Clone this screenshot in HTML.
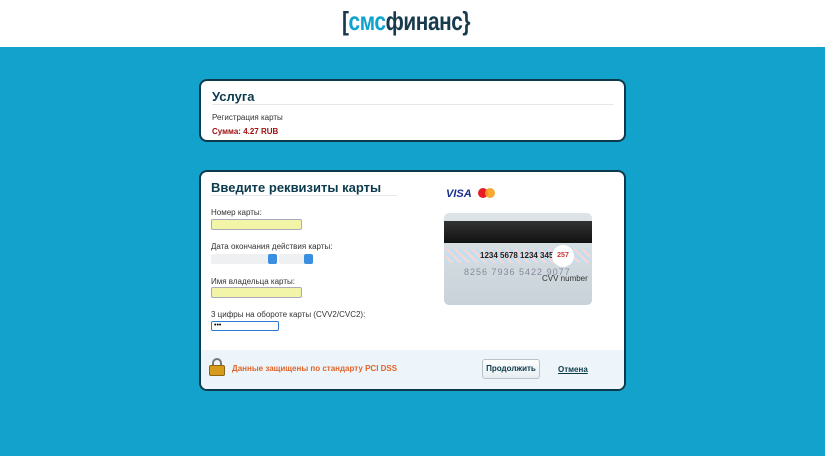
<!DOCTYPE html>
<html><head><meta charset="utf-8"><style>
*{box-sizing:border-box;margin:0;padding:0}
body{width:825px;height:456px;background:#12a2cb;font-family:"Liberation Sans",sans-serif;position:relative;overflow:hidden}
.hdr{position:absolute;left:0;top:0;width:825px;height:47px;background:#fff}
.logo{position:absolute;left:342px;top:4px;font-size:26px;font-weight:bold;letter-spacing:-0.5px;color:#173a4d;line-height:34px;transform:scaleX(0.8);transform-origin:left top;white-space:nowrap}
.logo .c{color:#0ea3cc}
.box{position:absolute;left:199px;width:427px;background:#fff;border:2px solid #0d3a4a;border-radius:8px;overflow:hidden}
h2{font-size:13px;color:#0b3b4d;font-weight:bold}
.hr{height:1px;background:#e4e8ea}
.s{font-size:8px;color:#333}
.inp{position:absolute;height:11px;background:#f2f4a8;border:1px solid #aab;border-radius:2px}
.sel{position:absolute;height:10px;background:#eef0f2;border-radius:2px}
.btn{position:absolute;width:9px;height:10px;background:#3a8fe0;border-radius:2px}
</style></head><body>
<div class="hdr"><div class="logo">[<span class="c">смс</span>финанс}</div></div>

<div class="box" style="top:79px;height:63px">
 <h2 style="position:absolute;left:11px;top:8px">Услуга</h2>
 <div class="hr" style="position:absolute;left:11px;top:23px;width:402px"></div>
 <div class="s" style="position:absolute;left:11px;top:32px">Регистрация карты</div>
 <div style="position:absolute;left:11px;top:46px;font-size:8px;font-weight:bold;color:#a01010">Сумма: 4.27 RUB</div>
</div>

<div class="box" style="top:170px;height:221px">
 <h2 style="position:absolute;left:10px;top:8px">Введите реквизиты карты</h2>
 <div class="hr" style="position:absolute;left:10px;top:23px;width:186px"></div>
 <div class="s" style="position:absolute;left:10px;top:36px">Номер карты:</div>
 <div class="inp" style="left:10px;top:47px;width:91px"></div>
 <div class="s" style="position:absolute;left:10px;top:70px">Дата окончания действия карты:</div>
 <div class="sel" style="left:10px;top:82px;width:62px"></div><div class="btn" style="left:67px;top:82px"></div>
 <div class="sel" style="left:78px;top:82px;width:34px"></div><div class="btn" style="left:103px;top:82px"></div>
 <div class="s" style="position:absolute;left:10px;top:105px">Имя владельца карты:</div>
 <div class="inp" style="left:10px;top:115px;width:91px"></div>
 <div class="s" style="position:absolute;left:10px;top:138px">3 цифры на обороте карты (CVV2/CVC2):</div>
 <div style="position:absolute;left:10px;top:149px;width:68px;height:10px;border:1px solid #2a7bd0;border-radius:2px;font-size:7px;line-height:8px;padding-left:2px">•••</div>
 <div style="position:absolute;left:245px;top:16px;font-size:11px;font-weight:bold;font-style:italic;color:#1a2f8c">VISA</div>
 <div style="position:absolute;left:277px;top:16px;width:10px;height:10px;border-radius:50%;background:#e81c24"></div>
 <div style="position:absolute;left:284px;top:16px;width:10px;height:10px;border-radius:50%;background:#f7a01c;opacity:.9"></div>
 <div style="position:absolute;left:243px;top:41px;width:148px;height:92px;border-radius:5px;background:linear-gradient(180deg,#dde4e8,#c8d2d8)">
  <div style="position:absolute;left:0;top:8px;width:148px;height:22px;background:linear-gradient(#333,#111)"></div>
  <div style="position:absolute;left:2px;top:36px;width:144px;height:14px;background:repeating-linear-gradient(45deg,#bfe0f0 0 3px,#f3d6d6 3px 6px)"></div>
  <div style="position:absolute;left:36px;top:38px;font-size:8px;font-weight:bold;color:#222">1234 5678 1234 3456</div>
  <div style="position:absolute;left:108px;top:32px;width:22px;height:22px;border-radius:50%;background:#fff;font-size:7px;color:#c33;text-align:center;line-height:22px;font-weight:bold">257</div>
  <div style="position:absolute;left:20px;top:54px;font-size:9px;color:#889;letter-spacing:1px">8256 7936 5422 9077</div>
  <div style="position:absolute;left:98px;top:61px;font-size:8px;color:#333">CVV number</div>
 </div>
 <div style="position:absolute;left:0;top:178px;width:423px;height:41px;background:#eef5fa"></div>
 <div style="position:absolute;left:8px;top:186px;width:16px;height:18px;">
  <div style="position:absolute;left:3px;top:0;width:10px;height:10px;border:2px solid #777;border-radius:5px 5px 0 0"></div>
  <div style="position:absolute;left:0;top:7px;width:16px;height:11px;background:#d69a1c;border:1px solid #8a6410;border-radius:2px"></div>
 </div>
 <div style="position:absolute;left:31px;top:192px;font-size:8px;font-weight:bold;color:#e0642a">Данные защищены по стандарту PCI DSS</div>
 <div style="position:absolute;left:281px;top:187px;width:58px;height:20px;border:1px solid #b8c4cc;border-radius:3px;background:linear-gradient(#fff,#e6eef2);font-size:8px;font-weight:bold;color:#0d3a4a;text-align:center;line-height:18px">Продолжить</div>
 <div style="position:absolute;left:357px;top:193px;font-size:8px;font-weight:bold;color:#0d3a4a;text-decoration:underline">Отмена</div>
</div>
</body></html>
